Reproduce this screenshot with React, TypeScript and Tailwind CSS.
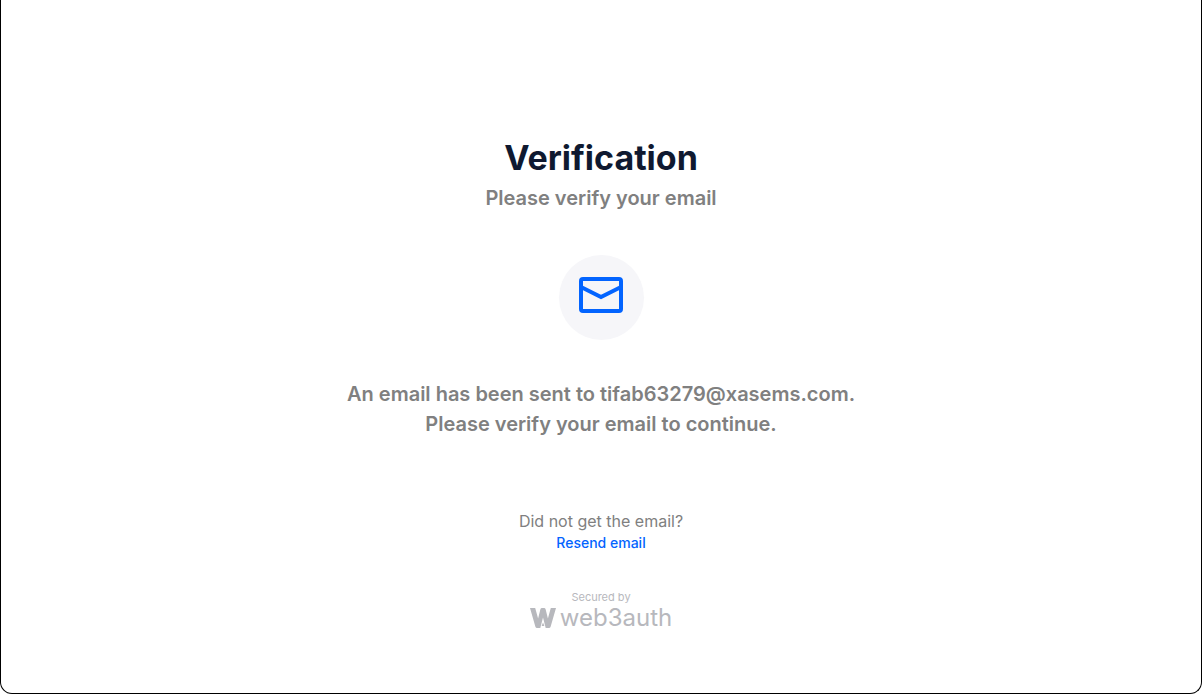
function MailIcon() {
  return (
    <svg viewBox="0 0 44 36" className="mb-1.5 h-9 w-11" fill="none" stroke="#0364ff" strokeWidth="4" strokeLinejoin="round" aria-hidden="true">
      <rect x="2" y="2" width="40" height="32" rx="2" />
      <path d="M2 10 22 20 42 10" strokeLinejoin="miter" />
    </svg>
  );
}

function BrandMark() {
  return (
    <svg viewBox="0 0 26 20" className="h-5 w-[26px]" fill="#b7b8bd" aria-hidden="true">
      <path d="M0 0h5.200l2.900 10.500L10.400 1.200Q10.700 0 12 0h2q1.300 0 1.600 1.200L17.900 10.500 20.800 0H26l-5.400 18.800Q20.200 20 19 20h-3.300L13 9.500 10.300 20H7Q5.800 20 5.400 18.800z" />
      <path d="m13 14.500 1.400 3.500h-2.800z" />
    </svg>
  );
}

export default function App() {
  return (
    <main className="flex min-h-screen flex-col items-center rounded-b-xl border-x border-b border-black bg-white px-6 pt-[134px] pb-14 text-center font-['Inter',sans-serif] text-[#808080]">
      <h1 className="text-[34px] leading-12 font-bold text-[#0f1930]">Verification</h1>
      <p className="text-[20px] leading-8 font-semibold">Please verify your email</p>
      <div className="mt-[41px] flex size-[85px] items-center justify-center rounded-full bg-[#f6f6f9]">
        <MailIcon />
      </div>
      <p className="mt-[39px] text-[20px] leading-[30px] font-semibold">
        An email has been sent to tifab63279@xasems.com.
        <br />
        Please verify your email to continue.
      </p>
      <p className="mt-[70px] text-[16px] leading-6">Did not get the email?</p>
      <button type="button" className="text-[14px] leading-5 font-medium text-[#0364ff]">
        Resend email
      </button>
      <footer className="mt-9 flex flex-col items-center text-[#b7b8bd]">
        <span className="text-[11px] leading-4">Secured by</span>
        <div className="mt-px flex items-center gap-1">
          <BrandMark />
          <span className="text-[24px] leading-6">web3auth</span>
        </div>
      </footer>
    </main>
  );
}
